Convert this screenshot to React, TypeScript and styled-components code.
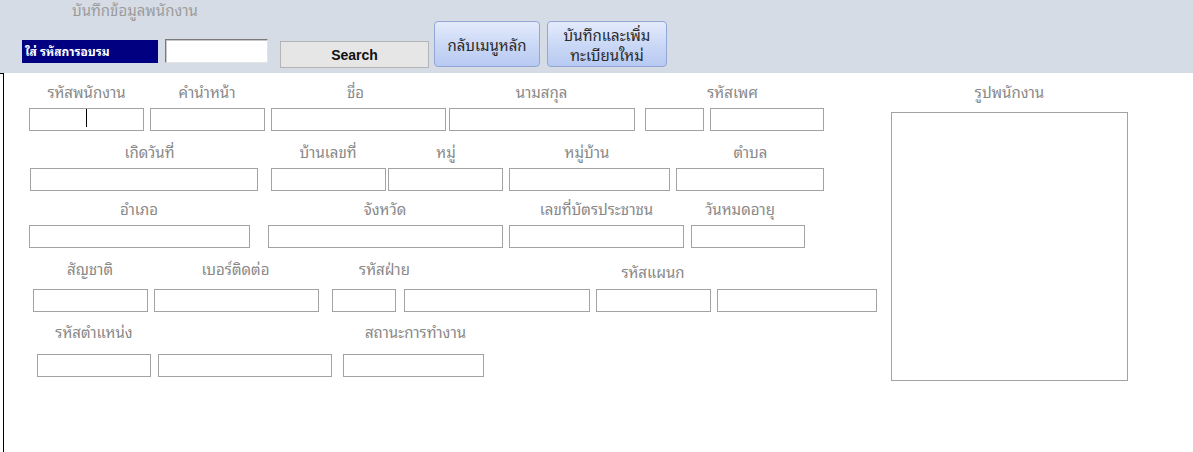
import React from "react";
import styled, { createGlobalStyle } from "styled-components";

const THAI = `Tahoma, "Noto Sans Thai Looped", "Noto Sans Thai", "Leelawadee UI", "Noto Sans", sans-serif`;

const GlobalStyle = createGlobalStyle`
  html, body { margin: 0; padding: 0; background: #ffffff; }
  body {
    width: 1193px;
    height: 452px;
    overflow: hidden;
    font-family: ${THAI};
  }
  * { box-sizing: border-box; }
`;

const Page = styled.div`
  display: flex;
  flex-direction: column;
  width: 1193px;
  height: 452px;
`;

const Header = styled.header`
  display: flex;
  align-items: flex-start;
  height: 73px;
  background: #d6dce6;
`;

const HeaderLeft = styled.div`
  display: flex;
  flex-direction: column;
  width: 429px;
`;

const Title = styled.div`
  height: 39px;
  padding-left: 72px;
  font-size: 15px;
  line-height: 19px;
  color: #9b9b9b;
`;

const SearchRow = styled.div`
  display: flex;
  align-items: flex-start;
`;

const CodeTag = styled.div`
  margin-left: 22px;
  margin-top: 1px;
  width: 136px;
  height: 23px;
  background: #000080;
  color: #ffffff;
  font-size: 12px;
  font-weight: bold;
  line-height: 22px;
  padding-left: 3px;
  white-space: nowrap;
`;

const CodeInput = styled.input`
  margin-left: 7px;
  width: 103px;
  height: 24px;
  background: #ffffff;
  border-style: solid;
  border-width: 1px;
  border-color: #7a7a7a #e2e2e2 #e2e2e2 #7a7a7a;
  box-shadow: inset 1px 1px 0 #c8c8c8;
  outline: none;
  padding: 0 3px;
  font-size: 13px;
`;

const SearchButton = styled.button`
  margin-left: 12px;
  margin-top: 2px;
  width: 149px;
  height: 27px;
  background: #e6e6e6;
  border: 1px solid #b4b4b4;
  font-family: Arial, "Liberation Sans", sans-serif;
  font-size: 14px;
  font-weight: bold;
  color: #111111;
  padding: 0;
  cursor: pointer;
`;

const MenuButton = styled.button<{ $w: number; $ml: number }>`
  margin-left: ${(p) => p.$ml}px;
  margin-top: 21px;
  width: ${(p) => p.$w}px;
  height: 46px;
  border: 1px solid #93a7d6;
  border-radius: 4px;
  background: linear-gradient(#e4ebfb, #c9d7f6 55%, #b8caf2);
  font-family: ${THAI};
  font-size: 15px;
  line-height: 20px;
  color: #2a2a2a;
  padding: 0 2px;
  cursor: pointer;
`;

const ButtonLine = styled.span`
  display: block;
  white-space: nowrap;
`;

const Main = styled.main`
  flex: 1;
  display: flex;
  margin-left: 3px;
  border-left: 1px solid #000000;
  position: relative;
  &::before {
    content: "";
    position: absolute;
    left: -4px;
    top: 0;
    width: 3px;
    border-top: 1px solid #000000;
  }
`;

const FormArea = styled.section`
  width: 880px;
  display: flex;
  flex-direction: column;
`;

const Row = styled.div<{ $mt: number }>`
  margin-top: ${(p) => p.$mt}px;
  display: flex;
  flex-direction: column;
`;

const LabelLine = styled.div`
  display: flex;
  height: 20px;
`;

const Label = styled.div<{ $ml: number; $w: number; $dy?: number }>`
  margin-left: ${(p) => p.$ml}px;
  width: ${(p) => p.$w}px;
  margin-top: ${(p) => p.$dy ?? 0}px;
  flex-shrink: 0;
  display: flex;
  justify-content: center;
  white-space: nowrap;
  font-size: 15px;
  line-height: 20px;
  color: #888888;
`;

const InputLine = styled.div<{ $mt: number }>`
  display: flex;
  margin-top: ${(p) => p.$mt}px;
`;

const FieldWrap = styled.div<{ $ml: number; $w: number }>`
  position: relative;
  flex-shrink: 0;
  margin-left: ${(p) => p.$ml}px;
  width: ${(p) => p.$w}px;
  height: 23px;
`;

const Field = styled.input`
  display: block;
  width: 100%;
  height: 100%;
  border: 1px solid #a3a3a3;
  background: #ffffff;
  outline: none;
  padding: 0 3px;
  font-size: 13px;
  text-align: center;
`;

const Caret = styled.span`
  position: absolute;
  left: 57px;
  top: 1px;
  width: 1px;
  height: 18px;
  background: #000000;
`;

const PhotoColumn = styled.aside`
  margin-left: 7px;
  padding-top: 8px;
  width: 237px;
  display: flex;
  flex-direction: column;
`;

const PhotoLabel = styled.div`
  height: 20px;
  text-align: center;
  font-size: 15px;
  line-height: 20px;
  color: #888888;
`;

const PhotoBox = styled.div`
  margin-top: 11px;
  height: 269px;
  border: 1px solid #a3a3a3;
  background: #ffffff;
`;

type LabelDef = { text: string; x1: number; x2: number; dy?: number };
type FieldDef = { x: number; w: number; caret?: boolean };
type RowDef = { mt: number; gap: number; labels: LabelDef[]; fields: FieldDef[] };

const ORIGIN = 4;

const rows: RowDef[] = [
  {
    mt: 8,
    gap: 7,
    labels: [
      { text: "รหัสพนักงาน", x1: 36, x2: 137 },
      { text: "คำนำหน้า", x1: 162, x2: 252 },
      { text: "ชื่อ", x1: 320, x2: 391 },
      { text: "นามสกุล", x1: 496, x2: 587 },
      { text: "รหัสเพศ", x1: 688, x2: 777 },
    ],
    fields: [
      { x: 29, w: 115, caret: true },
      { x: 150, w: 115 },
      { x: 271, w: 175 },
      { x: 449, w: 186 },
      { x: 645, w: 59 },
      { x: 710, w: 114 },
    ],
  },
  {
    mt: 10,
    gap: 7,
    labels: [
      { text: "เกิดวันที่", x1: 100, x2: 199 },
      { text: "บ้านเลขที่", x1: 283, x2: 373 },
      { text: "หมู่", x1: 416, x2: 476 },
      { text: "หมู่บ้าน", x1: 547, x2: 627 },
      { text: "ตำบล", x1: 715, x2: 786 },
    ],
    fields: [
      { x: 30, w: 228 },
      { x: 271, w: 115 },
      { x: 388, w: 115 },
      { x: 509, w: 161 },
      { x: 676, w: 148 },
    ],
  },
  {
    mt: 7,
    gap: 7,
    labels: [
      { text: "อำเภอ", x1: 99, x2: 179 },
      { text: "จังหวัด", x1: 345, x2: 425 },
      { text: "เลขที่บัตรประชาชน", x1: 521, x2: 672 },
      { text: "วันหมดอายุ", x1: 684, x2: 796 },
    ],
    fields: [
      { x: 29, w: 221 },
      { x: 268, w: 235 },
      { x: 509, w: 175 },
      { x: 691, w: 114 },
    ],
  },
  {
    mt: 10,
    gap: 11,
    labels: [
      { text: "สัญชาติ", x1: 50, x2: 130 },
      { text: "เบอร์ติดต่อ", x1: 186, x2: 285 },
      { text: "รหัสฝ่าย", x1: 342, x2: 427 },
      { text: "รหัสแผนก", x1: 608, x2: 698, dy: 3 },
    ],
    fields: [
      { x: 33, w: 115 },
      { x: 154, w: 165 },
      { x: 332, w: 64 },
      { x: 404, w: 186 },
      { x: 596, w: 115 },
      { x: 717, w: 160 },
    ],
  },
  {
    mt: 9,
    gap: 13,
    labels: [
      { text: "รหัสตำแหน่ง", x1: 44, x2: 144 },
      { text: "สถานะการทำงาน", x1: 350, x2: 481 },
    ],
    fields: [
      { x: 37, w: 114 },
      { x: 158, w: 174 },
      { x: 343, w: 141 },
    ],
  },
];

function FormRow({ row }: { row: RowDef }) {
  let labelEnd = ORIGIN;
  let fieldEnd = ORIGIN;
  return (
    <Row $mt={row.mt}>
      <LabelLine>
        {row.labels.map((l) => {
          const ml = l.x1 - labelEnd;
          labelEnd = l.x2;
          return (
            <Label key={l.text} $ml={ml} $w={l.x2 - l.x1} $dy={l.dy}>
              {l.text}
            </Label>
          );
        })}
      </LabelLine>
      <InputLine $mt={row.gap}>
        {row.fields.map((f, i) => {
          const ml = f.x - fieldEnd;
          fieldEnd = f.x + f.w;
          return (
            <FieldWrap key={i} $ml={ml} $w={f.w}>
              <Field type="text" />
              {f.caret && <Caret />}
            </FieldWrap>
          );
        })}
      </InputLine>
    </Row>
  );
}

export default function App() {
  return (
    <>
      <GlobalStyle />
      <Page>
        <Header>
          <HeaderLeft>
            <Title>บันทึกข้อมูลพนักงาน</Title>
            <SearchRow>
              <CodeTag>ใส่ รหัสการอบรม</CodeTag>
              <CodeInput type="text" />
              <SearchButton type="button">Search</SearchButton>
            </SearchRow>
          </HeaderLeft>
          <MenuButton type="button" $w={106} $ml={5}>
            กลับเมนูหลัก
          </MenuButton>
          <MenuButton type="button" $w={120} $ml={7}>
            <ButtonLine>บันทึกและเพิ่ม</ButtonLine>
            <ButtonLine>ทะเบียนใหม่</ButtonLine>
          </MenuButton>
        </Header>
        <Main>
          <FormArea>
            {rows.map((r, i) => (
              <FormRow key={i} row={r} />
            ))}
          </FormArea>
          <PhotoColumn>
            <PhotoLabel>รูปพนักงาน</PhotoLabel>
            <PhotoBox />
          </PhotoColumn>
        </Main>
      </Page>
    </>
  );
}
